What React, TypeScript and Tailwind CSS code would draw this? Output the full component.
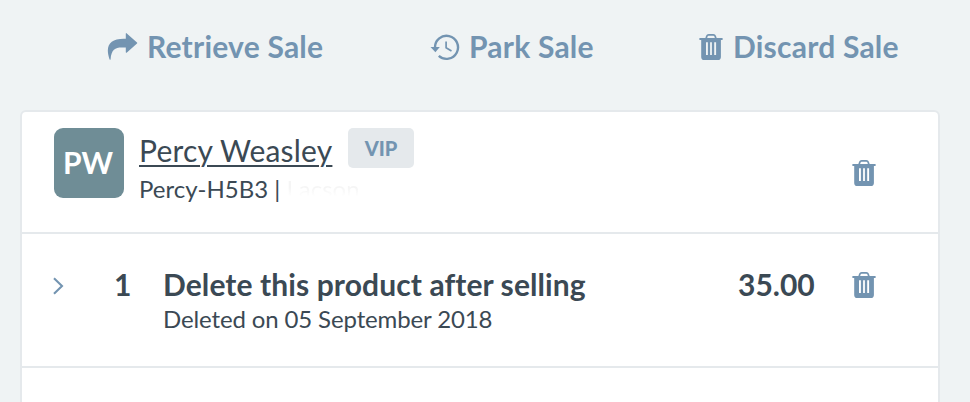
import React from "react";

function TrashIcon() {
  return (
    <svg width="24" height="28" viewBox="0 0 24 28" className="block shrink-0">
      <path d="M6.9 6 L7.9 3 Q8.3 1.8 9.6 1.8 H14.4 Q15.7 1.8 16.1 3 L17.1 6" fill="none" stroke="#7394b1" strokeWidth="1.7" />
      <path
        fill="#7394b1"
        fillRule="evenodd"
        d="M.4 5.1 H23.6 V7 H21.9 V24 Q21.9 27.1 18.8 27.1 H5.2 Q2.2 27.1 2.2 24 V7 H.4 Z M7 9.2 V22 H8.9 V9.2 Z M11.1 9.2 V22 H12.9 V9.2 Z M15.2 9.2 V22 H17.1 V9.2 Z"
      />
    </svg>
  );
}

function ForwardIcon() {
  return (
    <svg width="32" height="30" viewBox="0 0 32 30" className="block shrink-0">
      <path
        fill="#7394b1"
        d="M19.8 1.5 Q19.9 .8 20.5 1.2 L31 10.6 Q31.5 11.1 31 11.6 L20.6 20.7 Q19.8 21 19.8 20.3 V15.6 C11 14.8 5.4 15.6 4.6 27.2 Q4.3 28.4 3.5 27.2 C-1.2 13.5 4 6 19.8 6.7 Z"
      />
    </svg>
  );
}

function HistoryIcon() {
  return (
    <svg width="30" height="28" viewBox="0 0 30 28" className="block shrink-0">
      <path d="M5 14.6 A11.5 11.5 0 1 1 8.8 22.9" fill="none" stroke="#7394b1" strokeWidth="2.4" />
      <path d="M.5 14 H9.8 L5.4 19.2 Z" fill="#7394b1" />
      <path d="M16.1 8.4 V14.8 L21.5 18" fill="none" stroke="#7394b1" strokeWidth="1.7" />
    </svg>
  );
}

export default function App() {
  return (
    <main className="h-[402px] w-[970px] overflow-hidden bg-[#eff3f4] font-['Lato',sans-serif] text-[#3b4954]">
      <nav className="flex h-[110px] text-[30px] leading-9 font-bold tracking-[0.22px] text-[#7394b1]">
        <button className="mt-[30px] ml-[106px] flex h-9 w-[324px] pt-[2px]">
          <ForwardIcon />
          <span className="-mt-1 ml-[9px] whitespace-nowrap">Retrieve Sale</span>
        </button>
        <button className="mt-[30px] flex h-9 w-[269px] pt-[3px]">
          <HistoryIcon />
          <span className="-mt-[5px] ml-[9px] whitespace-nowrap">Park Sale</span>
        </button>
        <button className="mt-[30px] flex h-9 pt-[3px]">
          <TrashIcon />
          <span className="-mt-[5px] ml-[10px] whitespace-nowrap">Discard Sale</span>
        </button>
      </nav>

      <section className="ml-5 h-[320px] w-[920px] rounded-[6px] border-2 border-[#e5e9ec] bg-white">
        <div className="flex h-[122px] border-b-2 border-[#e5e9ec] pl-8">
          <div className="mt-4 flex h-[70px] w-[70px] shrink-0 items-center justify-center rounded-[9px] bg-[#6f8d96] pr-[2px] pb-[2px] text-[30px] font-bold text-white">
            PW
          </div>
          <div className="ml-[15px] w-[713px] pt-4">
            <div className="flex h-10">
              <a className="mt-1 w-[193px] text-[30px] leading-9 tracking-[0.2px] whitespace-nowrap underline decoration-2 underline-offset-[3px]">Percy Weasley</a>
              <span className="ml-4 flex h-10 w-[66px] items-center justify-center rounded-[5px] bg-[#e5e9ec] text-[20px] font-black text-[#7394b1]">
                VIP
              </span>
            </div>
            <div className="mt-[6px] flex text-[24px] leading-[30px] whitespace-pre">
              <span>Percy-H5B3 | </span>
              <span className="bg-linear-to-b from-[#f5f5f5] from-45% to-white to-75% bg-clip-text text-transparent">Lacson</span>
            </div>
          </div>
          <div className="mt-[47px]">
            <TrashIcon />
          </div>
        </div>

        <div className="flex h-[134px] border-b-2 border-[#e5e9ec] pl-[30px]">
          <svg width="14" height="20" viewBox="0 0 14 20" className="mt-[42px] shrink-0">
            <path d="M2 2.2 L10 10 L2 17.8" fill="none" stroke="#7394b1" strokeWidth="2.1" />
          </svg>
          <span className="mt-8 ml-[48px] w-[49px] text-[30px] leading-9 font-bold">1</span>
          <div className="mt-8 w-[575px]">
            <h2 className="text-[30px] leading-9 font-bold tracking-[0.1px]">Delete this product after selling</h2>
            <p className="mt-[2px] text-[24px] leading-[30px] tracking-[-0.13px]">Deleted on 05 September 2018</p>
          </div>
          <span className="mt-8 w-[114px] text-[30px] leading-9 font-bold">35.00</span>
          <div className="mt-[37px]">
            <TrashIcon />
          </div>
        </div>
      </section>
    </main>
  );
}
